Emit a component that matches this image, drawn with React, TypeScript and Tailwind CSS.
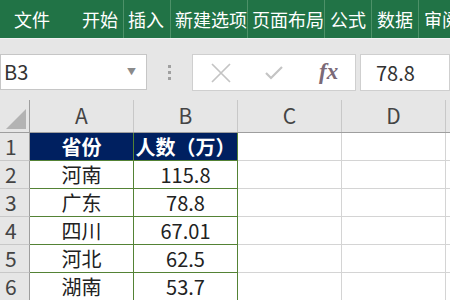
import React from 'react';

const font = { fontFamily: '"Noto Sans CJK SC", "Noto Sans", sans-serif' };

const tabs = [
  { label: '文件', w: 'w-[78px]', pl: 'pl-[14px]', sep: false },
  { label: '开始', w: 'w-[46px]', pl: 'pl-[4px]', sep: true },
  { label: '插入', w: 'w-[47px]', pl: 'pl-[4px]', sep: true },
  { label: '新建选项卡', w: 'w-[77px]', pl: 'pl-[4px]', sep: true },
  { label: '页面布局', w: 'w-[77px]', pl: 'pl-[4px]', sep: true },
  { label: '公式', w: 'w-[47px]', pl: 'pl-[5px]', sep: true },
  { label: '数据', w: 'w-[47px]', pl: 'pl-[5px]', sep: true },
  { label: '审阅', w: 'w-[60px]', pl: 'pl-[5px]', sep: false },
];

const rows = [
  ['河南', '115.8'],
  ['广东', '78.8'],
  ['四川', '67.01'],
  ['河北', '62.5'],
  ['湖南', '53.7'],
];

const Ribbon = () => (
  <div className="flex h-[38px] bg-[#217346] text-white text-[18px] leading-none overflow-hidden">
    {tabs.map((t) => (
      <div
        key={t.label}
        className={`${t.w} ${t.pl} shrink-0 flex items-center whitespace-nowrap overflow-hidden ${
          t.sep ? 'border-r border-[#4d9168]' : ''
        }`}
      >
        {t.label}
      </div>
    ))}
  </div>
);

const FormulaBar = () => (
  <div className="h-[62px] bg-[#e6e6e6] border-t border-[#f2f2f2] flex items-start pt-[15px]">
    <div className="w-[147px] h-[36px] bg-white border border-[#c6c6c6] flex items-center justify-between pl-[3px] pr-[10px]">
      <span className="text-[20px] text-[#333]">B3</span>
      <span className="text-[9px] text-[#8a8a8a]">▼</span>
    </div>
    <div className="w-[45px] h-[36px] flex flex-col items-center justify-center gap-[3px]">
      <span className="w-[3px] h-[3px] bg-[#a0a0a0]" />
      <span className="w-[3px] h-[3px] bg-[#a0a0a0]" />
      <span className="w-[3px] h-[3px] bg-[#a0a0a0]" />
    </div>
    <div className="w-[164px] h-[37px] bg-white border border-[#cfcfcf] flex items-center">
      <svg width="22" height="22" viewBox="0 0 22 22" className="ml-[17px]">
        <path d="M2 2 L20 20 M20 2 L2 20" stroke="#c4c4c4" strokeWidth="1.7" fill="none" />
      </svg>
      <svg width="20" height="18" viewBox="0 0 20 18" className="ml-[32px]">
        <path d="M2 9 L7 14 L18 3" stroke="#c4c4c4" strokeWidth="2.2" fill="none" />
      </svg>
      <span
        className="ml-[35px] text-[23px] italic font-bold text-[#7b6a78]"
        style={{ fontFamily: '"Liberation Serif", serif' }}
      >
        fx
      </span>
    </div>
    <div className="ml-[4px] flex-1 h-[37px] bg-white border border-[#cfcfcf] flex items-center pl-[15px]">
      <span className="text-[20px] text-[#333]">78.8</span>
    </div>
  </div>
);

const Grid = () => (
  <div className="bg-white">
    <div className="flex h-[33px] bg-[#e6e6e6] border-b border-[#9e9e9e] text-[21px] text-[#444]">
      <div className="w-[30px] shrink-0 border-r border-[#9e9e9e] relative">
        <svg width="20" height="20" viewBox="0 0 20 20" className="absolute right-[3px] bottom-[3px]">
          <path d="M20 0 L20 20 L0 20 Z" fill="#b3b3b3" />
        </svg>
      </div>
      {['A', 'B', 'C', 'D'].map((c) => (
        <div key={c} className="w-[104px] shrink-0 border-r border-[#c8c8c8] flex items-center justify-center">
          {c}
        </div>
      ))}
      <div className="flex-1" />
    </div>
    <div className="flex h-[28px] text-[20px]">
      <div className="w-[30px] shrink-0 bg-[#e6e6e6] border-r border-b border-r-[#9e9e9e] border-b-[#c8c8c8] pl-[5px] flex items-center text-[21px] text-[#444]">
        1
      </div>
      <div className="w-[104px] shrink-0 bg-[#002060] border-r border-b border-[#548235] flex items-center justify-center text-white font-bold">
        省份
      </div>
      <div className="w-[104px] shrink-0 bg-[#002060] border-r border-b border-[#548235] flex items-center justify-center text-white font-bold whitespace-nowrap">
        人数（万）
      </div>
      <div className="w-[104px] shrink-0 border-r border-b border-[#d4d4d4]" />
      <div className="w-[104px] shrink-0 border-r border-b border-[#d4d4d4]" />
      <div className="flex-1 border-b border-[#d4d4d4]" />
    </div>
    {rows.map(([name, value], i) => (
      <div key={name + i} className="flex h-[28px] text-[20px] text-[#222]">
        <div className="w-[30px] shrink-0 bg-[#e6e6e6] border-r border-b border-r-[#9e9e9e] border-b-[#c8c8c8] pl-[5px] flex items-center text-[21px] text-[#444]">
          {i + 2}
        </div>
        <div className="w-[104px] shrink-0 border-r border-b border-[#548235] flex items-center justify-center">
          {name}
        </div>
        <div className="w-[104px] shrink-0 border-r border-b border-[#548235] flex items-center justify-center">
          {value}
        </div>
        <div className="w-[104px] shrink-0 border-r border-b border-[#d4d4d4]" />
        <div className="w-[104px] shrink-0 border-r border-b border-[#d4d4d4]" />
        <div className="flex-1 border-b border-[#d4d4d4]" />
      </div>
    ))}
  </div>
);

const App = () => (
  <div className="w-[450px] h-[300px] overflow-hidden bg-white" style={font}>
    <Ribbon />
    <FormulaBar />
    <Grid />
  </div>
);

export default App;
